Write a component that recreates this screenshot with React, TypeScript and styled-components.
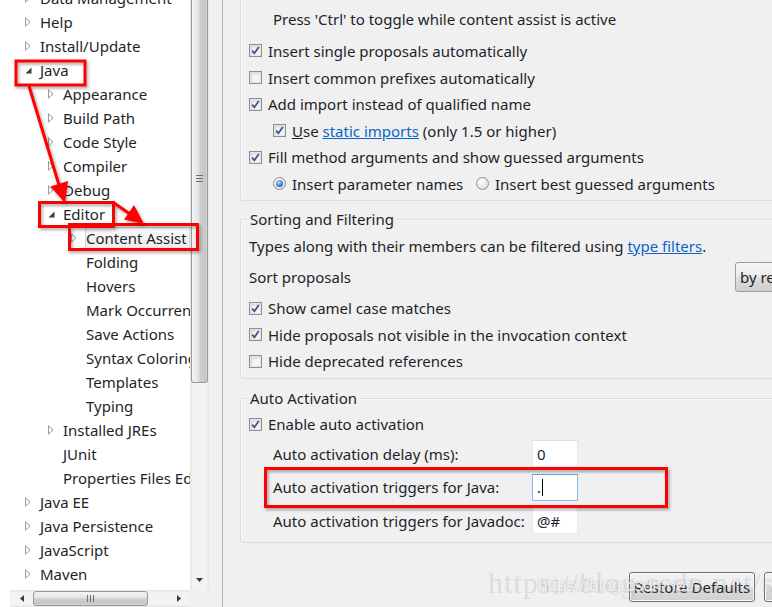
import React from 'react';
import styled, { createGlobalStyle } from 'styled-components';

const Global = createGlobalStyle`
  html, body { margin: 0; padding: 0; background: #f0f0f0; }
  #root { width: 772px; height: 607px; }
`;

const Screen = styled.div`
  position: relative;
  width: 772px;
  height: 607px;
  overflow: hidden;
  display: flex;
  background: #f0f0f0;
  font-family: "Noto Sans", "Open Sans", sans-serif;
  font-size: 15px;
  color: #1e1f29;
`;

/* ---------- left tree ---------- */
const LeftPane = styled.div`
  width: 209px;
  flex: 0 0 209px;
  display: flex;
  flex-direction: column;
  background: #fff;
`;

const TreeArea = styled.div`
  flex: 1;
  display: flex;
  min-height: 0;
`;

const Tree = styled.div`
  flex: 0 0 190px;
  width: 190px;
  overflow: hidden;
  display: flex;
  flex-direction: column;
  margin-top: -14px;
`;

const Row = styled.div<{ $level: number }>`
  height: 24px;
  flex: 0 0 24px;
  display: flex;
  align-items: center;
  padding-left: ${(p) => 22 + p.$level * 23}px;
  white-space: nowrap;
`;

const Twisty = styled.span`
  width: 18px;
  flex: 0 0 18px;
  height: 24px;
  display: flex;
  align-items: center;
  padding-left: 3px;
  box-sizing: border-box;
`;

const Label = styled.span<{ $selected?: boolean }>`
  line-height: 20px;
  padding: 0 2px 0 0;
  background: ${(p) => (p.$selected ? 'linear-gradient(#fafafa, #ececec)' : 'transparent')};
  outline: ${(p) => (p.$selected ? '1px solid #d9d9d9' : 'none')};
`;

const VScroll = styled.div`
  flex: 0 0 19px;
  width: 19px;
  display: flex;
  flex-direction: column;
  background: linear-gradient(to right, #e4e4e4, #f3f3f3 15%, #f3f3f3 85%, #e4e4e4);
`;

const VThumb = styled.div`
  height: 383px;
  margin: 0 1px;
  box-sizing: border-box;
  border: 1px solid #9a9a9a;
  border-top: none;
  border-radius: 0 0 3px 3px;
  background: linear-gradient(to right, #f4f4f4, #e6e6e6 40%, #cfcfcf 55%, #c6c6c6 90%, #dcdcdc);
  display: flex;
  align-items: flex-start;
  justify-content: center;
  padding-top: 175px;
`;

const Grip = styled.div<{ $horizontal?: boolean }>`
  display: flex;
  flex-direction: ${(p) => (p.$horizontal ? 'row' : 'column')};
  gap: 2px;
  & > i {
    display: block;
    background: #6e6e6e;
    width: ${(p) => (p.$horizontal ? '1px' : '7px')};
    height: ${(p) => (p.$horizontal ? '7px' : '1px')};
  }
`;

const VTrack = styled.div`
  flex: 1;
  display: flex;
  align-items: flex-end;
  justify-content: center;
  padding-bottom: 8px;
`;

const HScrollRow = styled.div`
  flex: 0 0 17px;
  height: 17px;
  display: flex;
`;

const HSpacer = styled.div`
  width: 10px;
  background: #fff;
`;

const HScroll = styled.div`
  width: 180px;
  display: flex;
  align-items: center;
  background: linear-gradient(#e4e4e4, #f3f3f3 15%, #f3f3f3 85%, #e4e4e4);
`;

const ArrowBox = styled.span`
  width: 23px;
  display: flex;
  justify-content: center;
  align-items: center;
`;

const HThumb = styled.div`
  width: 115px;
  height: 15px;
  box-sizing: border-box;
  border: 1px solid #9a9a9a;
  border-radius: 3px;
  background: linear-gradient(#f4f4f4, #e6e6e6 40%, #cfcfcf 55%, #c6c6c6 90%, #dcdcdc);
  display: flex;
  align-items: center;
  justify-content: center;
`;

const HTrackFill = styled.div`
  flex: 1;
`;

const Corner = styled.div`
  width: 19px;
  background: #f0f0f0;
`;

const Divider = styled.div`
  flex: 0 0 13px;
  width: 13px;
  background: #f0f0f0;
  border-right: 1px solid #b4b4b4;
`;

/* ---------- right pane ---------- */
const RightPane = styled.div`
  flex: 1;
  min-width: 0;
  padding-left: 17px;
  display: flex;
  flex-direction: column;
  background: #f0f0f0;
`;

const Group = styled.div<{ $mt: number; $pt: number; $pb: number }>`
  position: relative;
  width: 560px;
  flex: 0 0 auto;
  margin-top: ${(p) => p.$mt}px;
  padding: ${(p) => p.$pt}px 0 ${(p) => p.$pb}px 8px;
  border: 1px solid #d5dfe5;
  border-radius: 3px;
  box-shadow: inset 1px 1px 0 #fbfbfb;
  display: flex;
  flex-direction: column;
`;

const Legend = styled.span`
  position: absolute;
  top: -11px;
  left: 6px;
  padding: 0 3px;
  line-height: 20px;
  background: #f0f0f0;
`;

const TextRow = styled.div<{ $h: number; $indent?: number; $mt?: number }>`
  height: ${(p) => p.$h}px;
  flex: 0 0 ${(p) => p.$h}px;
  margin-top: ${(p) => p.$mt ?? 0}px;
  padding-left: ${(p) => p.$indent ?? 0}px;
  display: flex;
  align-items: center;
  white-space: nowrap;
`;

const SortLabel = styled.span`
  width: 486px;
  flex: 0 0 486px;
`;

const CheckRow = styled.label<{ $indent?: number; $h?: number }>`
  height: ${(p) => p.$h ?? 26.6}px;
  flex: 0 0 ${(p) => p.$h ?? 26.6}px;
  padding-left: ${(p) => p.$indent ?? 0}px;
  display: flex;
  align-items: center;
  white-space: nowrap;
`;

const Box = styled.span`
  width: 13px;
  height: 13px;
  flex: 0 0 13px;
  margin-right: 6px;
  box-sizing: border-box;
  border: 1px solid #8e8f8f;
  background: #f4f4f4;
  box-shadow: inset 0 0 0 1px #e4e4e4, inset 1px 1px 2px 1px #d4d4d4;
  display: flex;
  align-items: center;
  justify-content: center;
`;

const RadioItem = styled.label<{ $w?: number }>`
  display: flex;
  align-items: center;
  width: ${(p) => (p.$w ? `${p.$w}px` : 'auto')};
  white-space: nowrap;
`;

const RadioDot = styled.span<{ $on?: boolean }>`
  width: 13px;
  height: 13px;
  flex: 0 0 13px;
  margin-right: 6px;
  box-sizing: border-box;
  border-radius: 50%;
  border: 1px solid #8e8f8f;
  background: radial-gradient(circle at 40% 35%, #ffffff, #e2e2e2 70%, #d0d0d0);
  display: flex;
  align-items: center;
  justify-content: center;
  &::after {
    content: '';
    display: ${(p) => (p.$on ? 'block' : 'none')};
    width: 7px;
    height: 7px;
    border-radius: 50%;
    background: radial-gradient(circle at 40% 35%, #b9dcfb, #3f7fd0 55%, #1b4f94);
  }
`;

const Link = styled.span`
  color: #0b64c8;
  text-decoration: underline;
`;

const SelectBox = styled.div`
  width: 70px;
  flex: 0 0 70px;
  height: 30px;
  box-sizing: border-box;
  border: 1px solid #9c9c9c;
  border-radius: 3px;
  background: linear-gradient(#f6f6f6, #ebebeb 50%, #dddddd 51%, #cfcfcf);
  padding-left: 4px;
  display: flex;
  align-items: center;
  overflow: hidden;
`;

const FieldRow = styled.div<{ $mt: number }>`
  height: 27px;
  flex: 0 0 27px;
  margin-top: ${(p) => p.$mt}px;
  padding-left: 24px;
  display: flex;
  align-items: center;
  white-space: nowrap;
`;

const FieldLabel = styled.span`
  width: 259px;
  flex: 0 0 259px;
`;

const Field = styled.div<{ $focused?: boolean }>`
  width: 46px;
  height: 27px;
  box-sizing: border-box;
  background: #fff;
  border: 1px solid ${(p) => (p.$focused ? '#8cb9e8' : '#e6eaee')};
  border-top-color: ${(p) => (p.$focused ? '#6a9fd6' : '#d9dee3')};
  padding-left: 4px;
  display: flex;
  align-items: center;
  color: #1e1f29;
`;

const Caret = styled.span`
  display: inline-block;
  width: 1px;
  height: 17px;
  background: #000;
  margin-left: 1px;
`;

const ButtonRow = styled.div`
  margin-top: 29px;
  padding-left: 389px;
  display: flex;
  gap: 9px;
`;

const Button = styled.div<{ $w: number }>`
  width: ${(p) => p.$w}px;
  flex: 0 0 ${(p) => p.$w}px;
  height: 30px;
  box-sizing: border-box;
  border: 1px solid #707070;
  border-radius: 3px;
  background: linear-gradient(#f2f2f2, #ebebeb 50%, #dddddd 51%, #cfcfcf);
  box-shadow: inset 0 0 0 1px #fbfbfb;
  display: flex;
  align-items: center;
  justify-content: center;
  white-space: nowrap;
`;

/* ---------- overlays ---------- */
const Overlay = styled.svg`
  position: absolute;
  left: 0;
  top: 0;
  pointer-events: none;
`;

const WatermarkBig = styled.span`
  position: absolute;
  left: 488px;
  top: 566px;
  font-family: "Liberation Serif", serif;
  font-size: 30px;
  letter-spacing: 1px;
  color: rgba(170, 170, 170, 0.28);
  white-space: nowrap;
  pointer-events: none;
`;

const WatermarkSmall = styled.span`
  position: absolute;
  left: 538px;
  top: 576px;
  font-family: "Liberation Sans", sans-serif;
  font-size: 17px;
  color: rgba(255, 255, 255, 0.85);
  text-shadow: 0 0 2px rgba(120, 120, 120, 0.6);
  white-space: nowrap;
  pointer-events: none;
`;

/* ---------- icons ---------- */
const Collapsed = () => (
  <svg width="6" height="10" viewBox="0 0 6 10">
    <path d="M0.5 0.8 L5 5 L0.5 9.2 Z" fill="#fff" stroke="#9a9a9a" strokeWidth="1" />
  </svg>
);

const Expanded = () => (
  <svg width="7" height="7" viewBox="0 0 7 7">
    <path d="M6.5 0.5 L6.5 6.5 L0.5 6.5 Z" fill="#3c3c3c" />
  </svg>
);

const Check = () => (
  <svg width="9" height="9" viewBox="0 0 9 9">
    <path d="M1.2 4.6 L3.4 7.2 L7.8 1" fill="none" stroke="#3f5591" strokeWidth="1.8" />
  </svg>
);

const SmallTri = ({ dir }: { dir: 'down' | 'left' | 'right' }) => {
  const d =
    dir === 'down' ? 'M0 0 L7 0 L3.5 4 Z' : dir === 'left' ? 'M4 0 L4 7 L0 3.5 Z' : 'M0 0 L0 7 L4 3.5 Z';
  const w = dir === 'down' ? 7 : 4;
  const h = dir === 'down' ? 4 : 7;
  return (
    <svg width={w} height={h} viewBox={`0 0 ${w} ${h}`}>
      <path d={d} fill="#3a3a3a" />
    </svg>
  );
};

type Node = { t: string; l: number; k: 'c' | 'e' | 'n'; sel?: boolean };
const nodes: Node[] = [
  { t: 'Data Management', l: 0, k: 'c' },
  { t: 'Help', l: 0, k: 'c' },
  { t: 'Install/Update', l: 0, k: 'c' },
  { t: 'Java', l: 0, k: 'e' },
  { t: 'Appearance', l: 1, k: 'c' },
  { t: 'Build Path', l: 1, k: 'c' },
  { t: 'Code Style', l: 1, k: 'c' },
  { t: 'Compiler', l: 1, k: 'c' },
  { t: 'Debug', l: 1, k: 'c' },
  { t: 'Editor', l: 1, k: 'e' },
  { t: 'Content Assist', l: 2, k: 'c', sel: true },
  { t: 'Folding', l: 2, k: 'n' },
  { t: 'Hovers', l: 2, k: 'n' },
  { t: 'Mark Occurrences', l: 2, k: 'n' },
  { t: 'Save Actions', l: 2, k: 'n' },
  { t: 'Syntax Coloring', l: 2, k: 'n' },
  { t: 'Templates', l: 2, k: 'n' },
  { t: 'Typing', l: 2, k: 'n' },
  { t: 'Installed JREs', l: 1, k: 'c' },
  { t: 'JUnit', l: 1, k: 'n' },
  { t: 'Properties Files Editor', l: 1, k: 'n' },
  { t: 'Java EE', l: 0, k: 'c' },
  { t: 'Java Persistence', l: 0, k: 'c' },
  { t: 'JavaScript', l: 0, k: 'c' },
  { t: 'Maven', l: 0, k: 'c' },
];

const CB = ({ on }: { on?: boolean }) => <Box>{on && <Check />}</Box>;

export default function App() {
  return (
    <Screen>
      <Global />
      <LeftPane>
        <TreeArea>
          <Tree>
            {nodes.map((n) => (
              <Row key={n.t} $level={n.l}>
                <Twisty>{n.k === 'c' ? <Collapsed /> : n.k === 'e' ? <Expanded /> : null}</Twisty>
                <Label $selected={n.sel}>{n.t}</Label>
              </Row>
            ))}
          </Tree>
          <VScroll>
            <VThumb>
              <Grip>
                <i />
                <i />
                <i />
              </Grip>
            </VThumb>
            <VTrack>
              <SmallTri dir="down" />
            </VTrack>
          </VScroll>
        </TreeArea>
        <HScrollRow>
          <HSpacer />
          <HScroll>
            <ArrowBox>
              <SmallTri dir="left" />
            </ArrowBox>
            <HThumb>
              <Grip $horizontal>
                <i />
                <i />
                <i />
              </Grip>
            </HThumb>
            <HTrackFill />
            <ArrowBox>
              <SmallTri dir="right" />
            </ArrowBox>
          </HScroll>
          <Corner />
        </HScrollRow>
      </LeftPane>
      <Divider />
      <RightPane>
        <Group $mt={-10} $pt={16} $pb={2.7}>
          <TextRow $h={24} $indent={24}>
            Press 'Ctrl' to toggle while content assist is active
          </TextRow>
          <TextRow $h={6.7} />
          <CheckRow>
            <CB on />
            Insert single proposals automatically
          </CheckRow>
          <CheckRow>
            <CB />
            Insert common prefixes automatically
          </CheckRow>
          <CheckRow>
            <CB on />
            Add import instead of qualified name
          </CheckRow>
          <CheckRow $indent={24}>
            <CB on />
            <span>
              <u>U</u>se <Link>static imports</Link> (only 1.5 or higher)
            </span>
          </CheckRow>
          <CheckRow>
            <CB on />
            Fill method arguments and show guessed arguments
          </CheckRow>
          <CheckRow $indent={24}>
            <RadioItem $w={203}>
              <RadioDot $on />
              Insert parameter names
            </RadioItem>
            <RadioItem>
              <RadioDot />
              Insert best guessed arguments
            </RadioItem>
          </CheckRow>
        </Group>

        <Group $mt={18} $pt={14} $pb={4}>
          <Legend>Sorting and Filtering</Legend>
          <TextRow $h={24}>
            Types along with their members can be filtered using&nbsp;<Link>type filters</Link>.
          </TextRow>
          <TextRow $h={30} $mt={4}>
            <SortLabel>Sort proposals</SortLabel>
            <SelectBox>by relevance</SelectBox>
          </TextRow>
          <TextRow $h={3} />
          <CheckRow $h={26.5}>
            <CB on />
            Show camel case matches
          </CheckRow>
          <CheckRow $h={26.5}>
            <CB on />
            Hide proposals not visible in the invocation context
          </CheckRow>
          <CheckRow $h={26.5}>
            <CB />
            Hide deprecated references
          </CheckRow>
        </Group>

        <Group $mt={18.5} $pt={12} $pb={8}>
          <Legend>Auto Activation</Legend>
          <CheckRow $h={26.5}>
            <CB on />
            Enable auto activation
          </CheckRow>
          <FieldRow $mt={3}>
            <FieldLabel>Auto activation delay (ms):</FieldLabel>
            <Field>0</Field>
          </FieldRow>
          <FieldRow $mt={6.5}>
            <FieldLabel>Auto activation triggers for Java:</FieldLabel>
            <Field $focused>
              .<Caret />
            </Field>
          </FieldRow>
          <FieldRow $mt={6.5}>
            <FieldLabel>Auto activation triggers for Javadoc:</FieldLabel>
            <Field>@#</Field>
          </FieldRow>
        </Group>

        <ButtonRow>
          <Button $w={126}>Restore Defaults</Button>
          <Button $w={80}>Apply</Button>
        </ButtonRow>
      </RightPane>

      <WatermarkBig>https://blog.csdn.net/s</WatermarkBig>
      <WatermarkSmall>https://blog.csdn.net/</WatermarkSmall>

      <Overlay width="772" height="607" viewBox="0 0 772 607">
        <defs>
          <filter id="sh" x="-20%" y="-20%" width="140%" height="140%">
            <feDropShadow dx="1.5" dy="2" stdDeviation="1.5" floodColor="#000" floodOpacity="0.35" />
          </filter>
        </defs>
        <g filter="url(#sh)" fill="none" stroke="#f00" strokeWidth="3">
          <rect x="16" y="61" width="69" height="24" />
          <rect x="39.5" y="202.5" width="74" height="24" />
          <rect x="69.5" y="224.5" width="128" height="25" />
          <rect x="265.5" y="468.5" width="401" height="38" />
          <line x1="29" y1="86" x2="59" y2="185" />
          <line x1="114" y1="203" x2="130" y2="214" />
        </g>
        <g filter="url(#sh)" fill="#f00">
          <polygon points="65,203 50.5,186.5 68,181" />
          <polygon points="144,224 124,219.5 134,205" />
        </g>
      </Overlay>
    </Screen>
  );
}
